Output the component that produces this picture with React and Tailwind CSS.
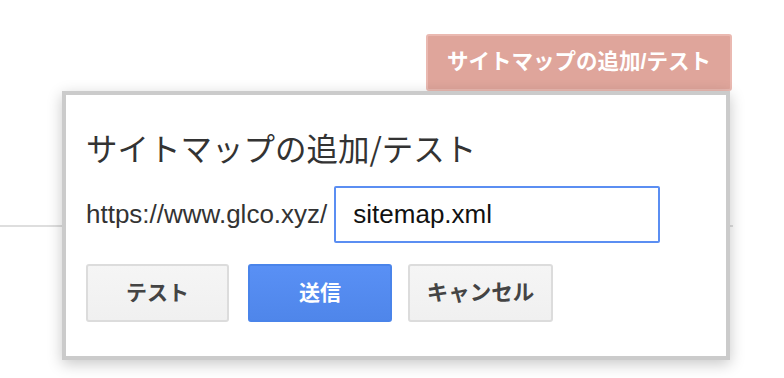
import React from 'react';

const FONT = '"Liberation Sans", "Noto Sans CJK JP", sans-serif';

export default function App() {
  return (
    <div className="relative w-[784px] h-[378px] bg-white overflow-hidden" style={{ fontFamily: FONT }}>
      {/* Page header with add button */}
      <div className="flex justify-end pt-[34px] pr-[52px]">
        <button className="h-[57px] w-[306px] rounded-[3px] border-2 border-[#eab9b1] bg-[#dfa59b] text-[21.5px] font-bold text-white">
          サイトマップの追加/テスト
        </button>
      </div>
      <div className="mt-[134px] h-[2px] w-[733px] bg-[#dedede]" />

      {/* Dialog */}
      <div className="absolute left-[62px] top-[91px] w-[668px] h-[269px] border-4 border-[#cbcbcb] bg-white pl-[20px] pt-[32px] shadow-[0_4px_14px_rgba(0,0,0,0.22)]">
        <h2 className="text-[31.5px] leading-[40px] font-normal text-[#333]" style={{ fontFamily: '"Noto Sans CJK JP", sans-serif' }}>
          サイトマップの追加/テスト
        </h2>
        <div className="mt-[19px] flex items-center">
          <span className="text-[26px] text-[#333]">https://www.glco.xyz/</span>
          <div className="ml-[7px] flex h-[57px] w-[326px] items-center rounded-[2px] border-2 border-[#5b8ef2] pl-[17px] text-[26px] text-[#111]">
            sitemap.xml
          </div>
        </div>
        <div className="mt-[21px] flex">
          <button className="h-[58px] w-[143px] rounded-[3px] border-2 border-[#dcdcdc] bg-gradient-to-b from-[#f5f5f5] to-[#f0f0f0] text-[21px] font-bold text-[#444]">
            テスト
          </button>
          <button className="ml-[19px] h-[58px] w-[144px] rounded-[3px] border-2 border-[#4a84ea] bg-gradient-to-b from-[#5990f5] to-[#4f86ea] text-[21px] font-bold text-white">
            送信
          </button>
          <button className="ml-[16px] h-[58px] w-[145px] rounded-[3px] border-2 border-[#dcdcdc] bg-gradient-to-b from-[#f5f5f5] to-[#f0f0f0] text-[21.5px] font-bold text-[#444]">
            キャンセル
          </button>
        </div>
      </div>
    </div>
  );
}
